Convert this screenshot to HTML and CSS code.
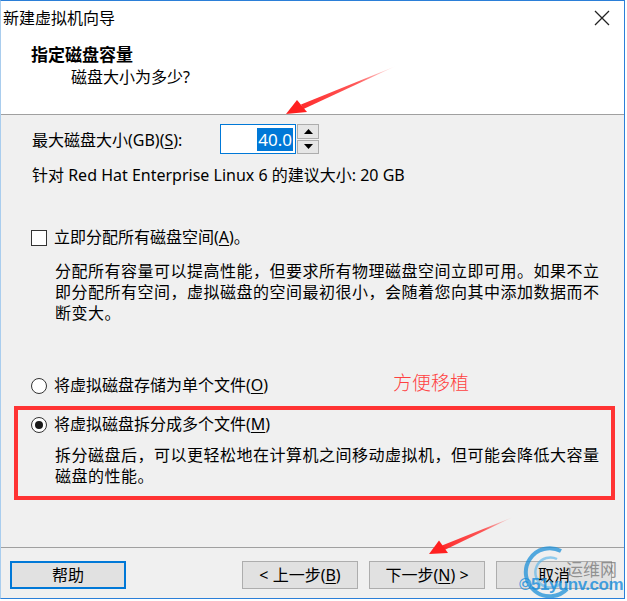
FILE: index.html
```html
<!DOCTYPE html>
<html>
<head>
<meta charset="utf-8">
<title>新建虚拟机向导</title>
<link rel="stylesheet" href="styles.css">
</head>
<body>
<div class="window">
  <div class="top">
    <div class="titlebar">
      <span class="title">新建虚拟机向导</span>
      <svg class="close" width="16" height="16" viewBox="0 0 16 16"><path d="M1 1 L15 15 M15 1 L1 15" stroke="#222" stroke-width="1.3" fill="none"/></svg>
    </div>
    <div class="header">
      <div class="h1">指定磁盘容量</div>
      <div class="h2">磁盘大小为多少?</div>
    </div>
  </div>

  <div class="body">
    <div class="size-row">
      <span class="size-label">最大磁盘大小(GB)(<u>S</u>):</span>
      <div class="spin-input"><span class="sel">40.0</span></div>
      <div class="spinner">
        <div class="spin-btn"><svg width="9" height="5" viewBox="0 0 9 5"><path d="M0 5 L4.5 0 L9 5 Z" fill="#000"/></svg></div>
        <div class="spin-btn"><svg width="9" height="5" viewBox="0 0 9 5"><path d="M0 0 L4.5 5 L9 0 Z" fill="#000"/></svg></div>
      </div>
    </div>
    <div class="hint">针对 Red Hat Enterprise Linux 6 的建议大小: 20 GB</div>

    <div class="option check-opt">
      <span class="checkbox"></span>
      <span>立即分配所有磁盘空间(<u>A</u>)。</span>
    </div>
    <p class="desc">分配所有容量可以提高性能，但要求所有物理磁盘空间立即可用。如果不立即分配所有空间，虚拟磁盘的空间最初很小，会随着您向其中添加数据而不断变大。</p>

    <div class="option radio-opt">
      <span class="radio"></span>
      <span>将虚拟磁盘存储为单个文件(<u>O</u>)</span>
    </div>

    <div class="annot-box">
      <div class="option">
        <span class="radio checked"></span>
        <span>将虚拟磁盘拆分成多个文件(<u>M</u>)</span>
      </div>
      <p class="desc">拆分磁盘后，可以更轻松地在计算机之间移动虚拟机，但可能会降低大容量磁盘的性能。</p>
    </div>
  </div>

  <div class="footer">
    <button class="btn btn-help">帮助</button>
    <button class="btn">&lt; 上一步(<u>B</u>)</button>
    <button class="btn">下一步(<u>N</u>) &gt;</button>
    <button class="btn">取消</button>
  </div>

  <div class="note">方便移植</div>

  <svg class="arrows" width="625" height="599" viewBox="0 0 625 599">
    <defs>
      <linearGradient id="g1" x1="395" y1="65" x2="285" y2="113" gradientUnits="userSpaceOnUse">
        <stop offset="0" stop-color="#ff3030" stop-opacity="0"/>
        <stop offset="0.35" stop-color="#ff3030" stop-opacity="0.8"/>
        <stop offset="1" stop-color="#ff2020"/>
      </linearGradient>
      <linearGradient id="g2" x1="512" y1="516" x2="428" y2="553" gradientUnits="userSpaceOnUse">
        <stop offset="0" stop-color="#ff3030" stop-opacity="0"/>
        <stop offset="0.35" stop-color="#ff3030" stop-opacity="0.8"/>
        <stop offset="1" stop-color="#ff2020"/>
      </linearGradient>
    </defs>
    <path d="M395 65 L300 103.5 L302.5 108 Z" fill="url(#g1)"/>
    <path d="M285 113 L296 99 L306 111 Z" fill="#ff2020"/>
    <path d="M512 516 L441 544.5 L443.5 549 Z" fill="url(#g2)"/>
    <path d="M428 553 L438 539.5 L447 552 Z" fill="#ff2020"/>
  </svg>

  <div class="watermark">
    <svg class="wm-logo" width="60" height="56" viewBox="0 0 60 56"><path d="M40 6 A24 24 0 1 0 46 44" stroke="#1e90d8" stroke-width="4" fill="none" opacity="0.75"/><path d="M36 14 A15 15 0 1 0 40 38" stroke="#4fb0ea" stroke-width="2.5" fill="none" opacity="0.6"/></svg>
    <span class="wm-cn">运维网</span>
    <span class="wm-en">©51yunv.com</span>
  </div>
</div>
</body>
</html>
```

FILE: styles.css
```css
* { box-sizing: border-box; }

body {
  margin: 0;
  background: #ffffff;
  font-family: "Noto Sans", "Noto Sans CJK SC", sans-serif;
  font-size: 16px;
  color: #000;
}

u { text-decoration: underline; text-underline-offset: 2px; }

.window {
  position: relative;
  width: 625px;
  height: 599px;
  border: 1px solid #2b7fd8;
  border-left-color: #a9cdee;
  background: #f0f0f0;
  display: flex;
  flex-direction: column;
  overflow: hidden;
}

.top {
  background: #ffffff;
  height: 114px;
  border-bottom: 1px solid #a0a0a0;
  flex: none;
}

.titlebar {
  height: 34px;
  display: flex;
  align-items: center;
  justify-content: space-between;
  padding: 0 14px 0 2px;
}

.title {
  font-size: 16px;
  line-height: 20px;
}

.header {
  padding: 9px 0 0 30px;
}

.h1 {
  font-weight: bold;
  font-size: 17px;
  line-height: 22px;
}

.h2 {
  padding-left: 40px;
  line-height: 22px;
}

.body {
  flex: 1;
  padding: 9px 20px 0 30px;
  display: flex;
  flex-direction: column;
}

.size-row {
  display: flex;
  align-items: center;
  height: 30px;
}

.size-label {
  width: 189px;
  padding-left: 1px;
}

.spin-input {
  width: 76px;
  height: 30px;
  border: 1px solid #0078d7;
  background: #fff;
  display: flex;
  align-items: center;
  justify-content: flex-end;
  padding-right: 2px;
}

.sel {
  background: #0078d7;
  color: #fff;
  font-size: 17px;
  line-height: 23px;
  padding: 0 1px;
}

.spinner {
  width: 22px;
  height: 30px;
  display: flex;
  flex-direction: column;
  gap: 1px;
  margin-left: 1px;
}

.spin-btn {
  flex: 1;
  background: #e6e6e6;
  border: 1px solid #adadad;
  display: flex;
  align-items: center;
  justify-content: center;
}

.hint {
  margin-top: 11px;
  line-height: 21px;
  padding-left: 1px;
}

.option {
  display: flex;
  align-items: center;
  gap: 7px;
  line-height: 21px;
}

.check-opt { margin-top: 41px; }

.checkbox {
  width: 16px;
  height: 16px;
  border: 1px solid #333;
  background: #fff;
  flex: none;
}

.radio {
  width: 16px;
  height: 16px;
  border: 1px solid #333;
  border-radius: 50%;
  background: #fff;
  flex: none;
  display: flex;
  align-items: center;
  justify-content: center;
}

.radio.checked::after {
  content: "";
  width: 8px;
  height: 8px;
  border-radius: 50%;
  background: #1a1a1a;
}

.desc {
  margin: 13px 0 0 0;
  padding-left: 24px;
  line-height: 21px;
  width: 573px;
  letter-spacing: 0.5px;
}

.radio-opt { margin-top: 51px; }

.annot-box {
  margin: 10px -11px 0 -17px;
  border: 4px solid #ff3333;
  padding: 4px 0 9px 13px;
}

.annot-box .desc { margin-top: 10px; }

.footer {
  flex: none;
  height: 51px;
  border-top: 1px solid #a0a0a0;
  display: flex;
  align-items: flex-start;
  gap: 11px;
  padding: 13px 12px 0 9px;
}

.btn {
  width: 116px;
  height: 28px;
  background: #e1e1e1;
  border: 1px solid #adadad;
  font-family: inherit;
  font-size: 16px;
  color: #000;
  padding: 0;
  line-height: 24px;
}

.btn-help {
  border: 2px solid #0078d7;
  margin-right: auto;
}

.note {
  position: absolute;
  left: 392px;
  top: 369px;
  color: #ff4040;
  font-size: 19px;
  line-height: 24px;
  font-family: "Noto Sans CJK SC", sans-serif;
  font-weight: 300;
}

.arrows {
  position: absolute;
  left: 0;
  top: 0;
  pointer-events: none;
}

.watermark {
  position: absolute;
  left: 500px;
  top: 548px;
  width: 125px;
  height: 51px;
  pointer-events: none;
}

.wm-logo {
  position: absolute;
  left: 20px;
  top: -4px;
}

.wm-cn {
  position: absolute;
  left: 65px;
  top: 7px;
  font-size: 17px;
  color: rgba(110, 110, 110, 0.7);
  font-family: "Noto Sans CJK SC", sans-serif;
}

.wm-en {
  position: absolute;
  left: 18px;
  top: 26px;
  font-size: 17px;
  font-weight: bold;
  color: rgba(20, 140, 220, 0.8);
  font-family: "Liberation Sans", sans-serif;
  letter-spacing: -0.5px;
}
```
